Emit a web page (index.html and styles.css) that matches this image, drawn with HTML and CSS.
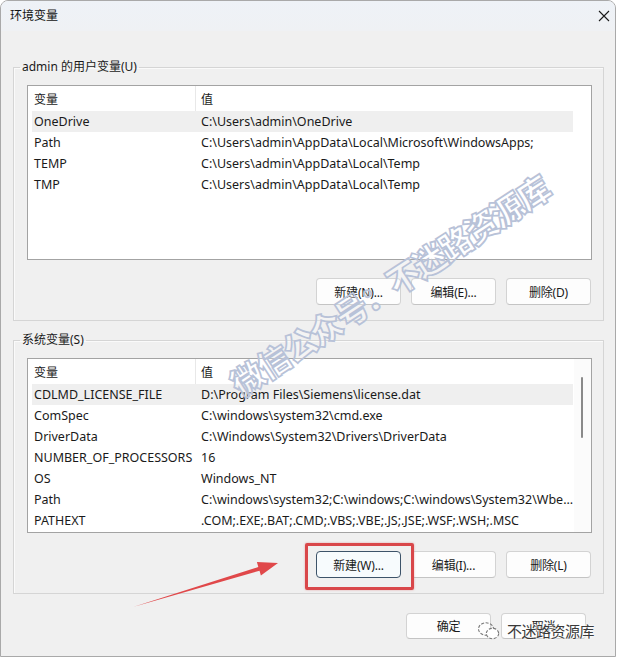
FILE: index.html
```html
<!DOCTYPE html>
<html lang="zh-CN">
<head>
<meta charset="utf-8">
<title>环境变量</title>
<link rel="stylesheet" href="styles.css">
</head>
<body>
<div class="window">
  <div class="titlebar">
    <span class="title">环境变量</span>
    <svg class="close" width="12" height="12" viewBox="0 0 12 12"><path d="M1 1L11 11M11 1L1 11" stroke="#1a1a1a" stroke-width="1.1" fill="none"/></svg>
  </div>
  <div class="content">
    <fieldset class="group user">
      <legend>admin 的用户变量(U)</legend>
      <div class="list">
        <div class="row head"><span class="name">变量</span><span class="val">值</span></div>
        <div class="row sel"><span class="name">OneDrive</span><span class="val">C:\Users\admin\OneDrive</span></div>
        <div class="row"><span class="name">Path</span><span class="val">C:\Users\admin\AppData\Local\Microsoft\WindowsApps;</span></div>
        <div class="row"><span class="name">TEMP</span><span class="val">C:\Users\admin\AppData\Local\Temp</span></div>
        <div class="row"><span class="name">TMP</span><span class="val">C:\Users\admin\AppData\Local\Temp</span></div>
      </div>
      <div class="btns">
        <button class="btn">新建(N)...</button>
        <button class="btn">编辑(E)...</button>
        <button class="btn">删除(D)</button>
      </div>
    </fieldset>
    <fieldset class="group sys">
      <legend>系统变量(S)</legend>
      <div class="list">
        <div class="row head"><span class="name">变量</span><span class="val">值</span></div>
        <div class="row sel"><span class="name">CDLMD_LICENSE_FILE</span><span class="val">D:\Program Files\Siemens\license.dat</span></div>
        <div class="row"><span class="name">ComSpec</span><span class="val">C:\windows\system32\cmd.exe</span></div>
        <div class="row"><span class="name">DriverData</span><span class="val">C:\Windows\System32\Drivers\DriverData</span></div>
        <div class="row"><span class="name">NUMBER_OF_PROCESSORS</span><span class="val">16</span></div>
        <div class="row"><span class="name">OS</span><span class="val">Windows_NT</span></div>
        <div class="row"><span class="name">Path</span><span class="val">C:\windows\system32;C:\windows;C:\windows\System32\Wbe...</span></div>
        <div class="row"><span class="name">PATHEXT</span><span class="val">.COM;.EXE;.BAT;.CMD;.VBS;.VBE;.JS;.JSE;.WSF;.WSH;.MSC</span></div>
        <div class="scroll"><div class="thumb"></div></div>
      </div>
      <div class="btns">
        <button class="btn focus">新建(W)...</button>
        <button class="btn">编辑(I)...</button>
        <button class="btn">删除(L)</button>
      </div>
    </fieldset>
    <div class="footer">
      <button class="btn">确定</button>
      <button class="btn">取消</button>
    </div>
  </div>

  <div class="watermark">微信公众号：不迷路资源库</div>
  <div class="redbox"></div>
  <svg class="arrow" width="618" height="659" viewBox="0 0 618 659">
    <polygon points="133,607 258.3,567.1 256.9,562.1 278,563 260.9,575.5 259.5,570.7" fill="#e0484a"/>
  </svg>
  <div class="brand">
    <svg width="24" height="20" viewBox="0 0 24 20"><ellipse cx="9" cy="8" rx="7.5" ry="6.2" fill="none" stroke="#777" stroke-width="1.1" stroke-dasharray="3 1.5"/><ellipse cx="15.5" cy="12.5" rx="6.2" ry="5.2" fill="#fff" stroke="#777" stroke-width="1.1" stroke-dasharray="3 1.5"/></svg>
    <span>不迷路资源库</span>
  </div>
</div>
</body>
</html>
```
FILE: styles.css
```css
html, body {
  margin: 0;
  padding: 0;
  background: #ffffff;
}
body {
  font-family: "Noto Sans", "Noto Sans CJK SC", sans-serif;
  font-size: 12px;
  color: #1a1a1a;
}
.window {
  position: relative;
  width: 616px;
  height: 657px;
  box-sizing: border-box;
  border: 1px solid #a9a9a9;
  border-radius: 8px 8px 0 0;
  background: #f0f0f0;
  overflow: hidden;
}
.titlebar {
  height: 30px;
  box-sizing: border-box;
  display: flex;
  align-items: center;
  justify-content: space-between;
  padding: 0 5px 3px 9px;
  background: linear-gradient(#eef2f7, #eff1f4);
}
.title {
  font-family: "Noto Sans CJK SC", sans-serif;
  font-size: 12px;
  color: #111;
}
.close {
  margin-top: 3px;
}
.content {
  padding: 0 11px 0 12px;
}
.group {
  margin: 0;
  border: 1px solid #d5d5d5;
  box-shadow: inset 1px 1px 0 #fafafa;
  padding: 10px 11px 15px 13px;
  min-width: 0;
}
.group.user {
  margin-top: 28px;
}
.group.sys {
  margin-top: 11px;
}
legend {
  padding: 0 2px;
  margin-left: -7px;
  line-height: 16px;
  font-family: "Noto Sans", "Noto Sans CJK SC", sans-serif;
  font-size: 12px;
  color: #1a1a1a;
}
.list {
  position: relative;
  height: 175px;
  box-sizing: border-box;
  border: 1px solid #a3a3a3;
  background: #fff;
  padding: 0 18px 0 4px;
  overflow: hidden;
}
.row {
  display: flex;
  height: 21px;
  align-items: center;
  white-space: nowrap;
  font-family: "Noto Sans", "Noto Sans CJK SC", sans-serif;
  font-size: 12.5px;
}
.row.head {
  height: 25px;
  font-family: "Noto Sans CJK SC", sans-serif;
  font-size: 12px;
}
.row.sel {
  background: #efefef;
}
.name {
  width: 164px;
  padding-left: 2px;
  box-sizing: border-box;
  flex: none;
  height: 100%;
  display: flex;
  align-items: center;
}
.head .name {
  border-right: 1px solid #e8e8e8;
}
.val {
  padding-left: 5px;
}
.scroll {
  position: absolute;
  top: 0;
  right: 0;
  width: 17px;
  bottom: 0;
  background: #fbfbfb;
}
.thumb {
  position: absolute;
  left: 7px;
  top: 18px;
  width: 2px;
  height: 61px;
  border-radius: 1px;
  background: #8a8a8a;
}
.btns {
  display: flex;
  justify-content: flex-end;
  gap: 10px;
  margin-top: 18px;
  padding-right: 1px;
}
.btn {
  width: 85px;
  height: 27px;
  box-sizing: border-box;
  border: 1px solid #d3d3d3;
  border-bottom-color: #c4c4c4;
  border-radius: 4px;
  background: #fdfdfd;
  font-family: "Noto Sans", "Noto Sans CJK SC", sans-serif;
  font-size: 12px;
  color: #1a1a1a;
  padding: 0;
  letter-spacing: -0.2px;
}
.btn.focus {
  border: 1px solid #3d5369;
  background: #f7fbfd;
}
.footer {
  display: flex;
  justify-content: flex-end;
  gap: 10px;
  margin-top: 19px;
  padding-right: 18px;
}
.footer .btn {
  height: 26px;
}
.watermark {
  position: absolute;
  left: 388px;
  top: 284px;
  transform: translate(-50%, -50%) rotate(-33deg);
  white-space: nowrap;
  font-family: "Noto Sans CJK SC", sans-serif;
  font-weight: 900;
  font-size: 33px;
  letter-spacing: -2px;
  color: rgba(255, 255, 255, 0.3);
  -webkit-text-stroke: 1.7px #b8c2d8;
  pointer-events: none;
}
.redbox {
  position: absolute;
  left: 304px;
  top: 542px;
  width: 103px;
  height: 41px;
  border: 3px solid #d9474a;
  border-radius: 2px;
  box-shadow: 0 0 2px rgba(217, 71, 74, 0.5);
}
.arrow {
  position: absolute;
  left: -1px;
  top: -1px;
  pointer-events: none;
}
.brand {
  position: absolute;
  left: 476px;
  top: 619px;
  display: flex;
  align-items: center;
  gap: 6px;
}
.brand span {
  font-family: "Noto Sans CJK SC", sans-serif;
  font-size: 15px;
  color: #3a3a3a;
  letter-spacing: -0.5px;
  text-shadow: 0 0 2px #fff, 0 0 2px #fff, 0 0 3px #fff;
}
```
